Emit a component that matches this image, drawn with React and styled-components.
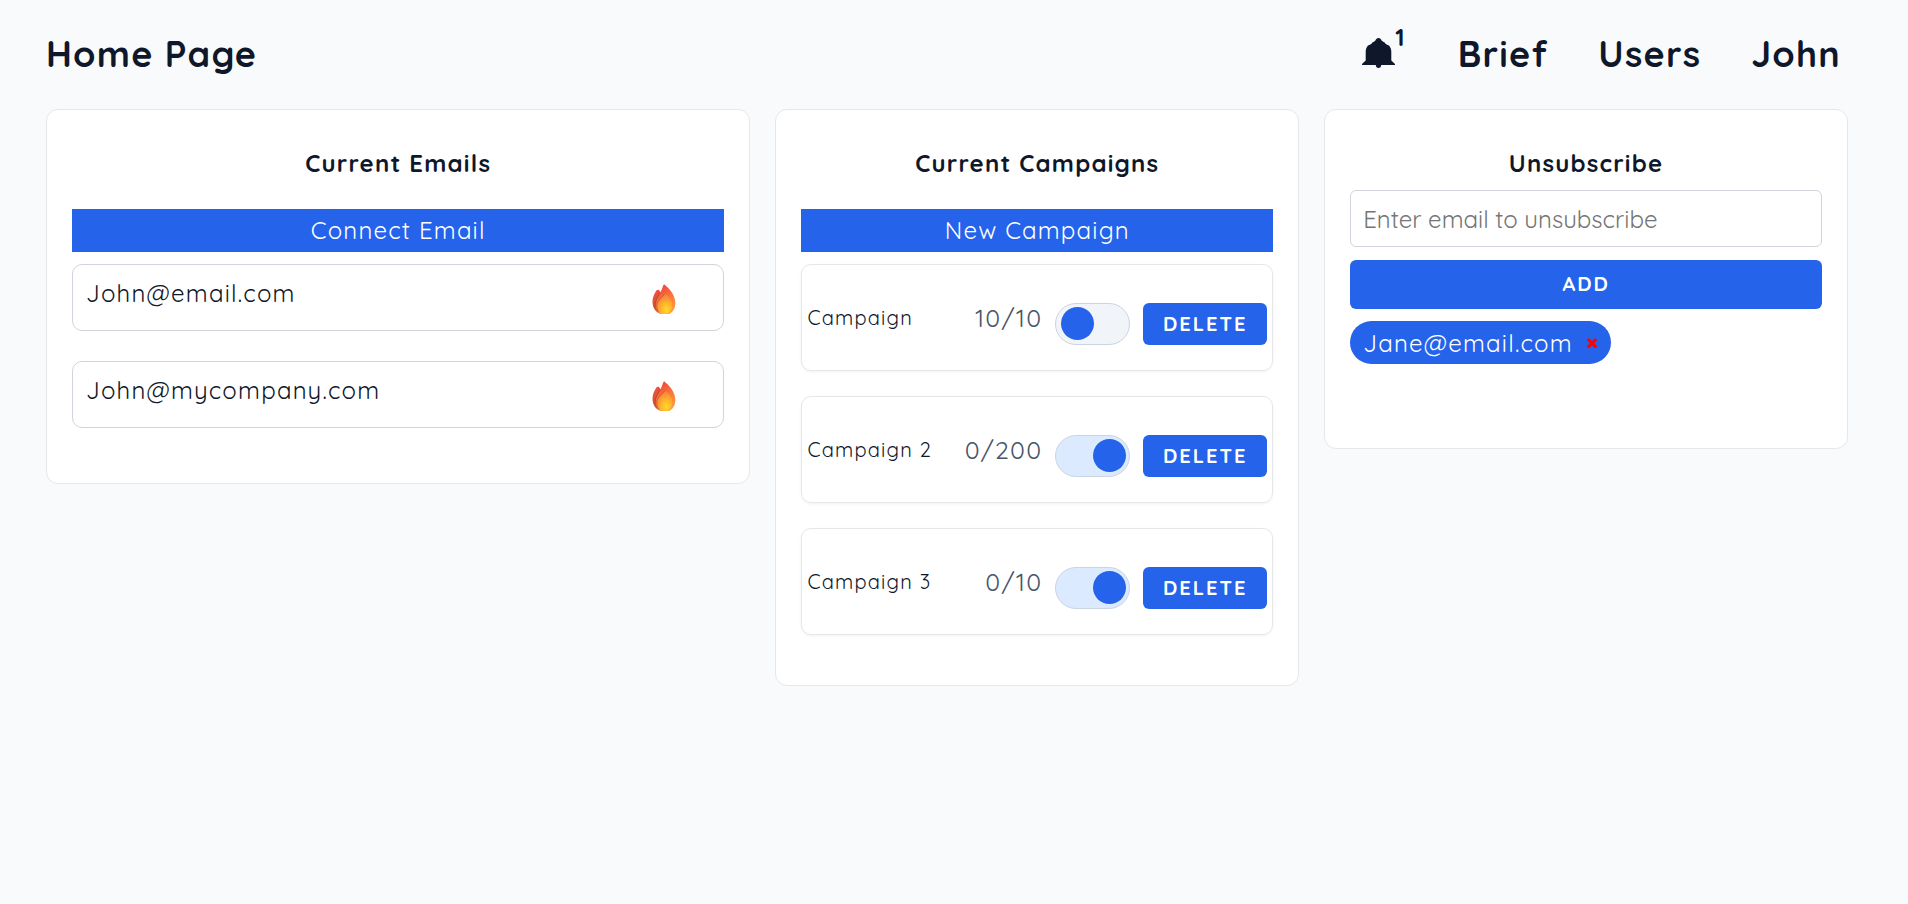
import { useState } from 'react';
import styled, { createGlobalStyle } from 'styled-components';

const emails = ['John@email.com', 'John@mycompany.com'];

const initialCampaigns = [
  { name: 'Campaign', sent: 10, total: 10, active: false },
  { name: 'Campaign 2', sent: 0, total: 200, active: true },
  { name: 'Campaign 3', sent: 0, total: 10, active: true },
];

const App = () => {
  const [campaigns, setCampaigns] = useState(initialCampaigns);
  const [blocked, setBlocked] = useState(['Jane@email.com']);
  const [inputValue, setInputValue] = useState('');

  const toggleCampaign = (name) => {
    setCampaigns(
      campaigns.map((c) => (c.name === name ? { ...c, active: !c.active } : c))
    );
  };

  const deleteCampaign = (name) => {
    setCampaigns(campaigns.filter((c) => c.name !== name));
  };

  const addBlocked = (e) => {
    e.preventDefault();
    const value = inputValue.trim();
    if (!value) return;
    setBlocked([...blocked, value]);
    setInputValue('');
  };

  return (
    <Page>
      <GlobalStyle />
      <Header>
        <PageTitle>Home Page</PageTitle>
        <Nav>
          <BellButton type="button" aria-label="Notifications">
            <BellIcon />
            <BellCount>1</BellCount>
          </BellButton>
          <NavLink href="#brief">Brief</NavLink>
          <NavLink href="#users">Users</NavLink>
          <NavLink href="#john">John</NavLink>
        </Nav>
      </Header>
      <Columns>
        <Card>
          <CardTitle>Current Emails</CardTitle>
          <BarButton type="button">Connect Email</BarButton>
          <List $gap="30px">
            {emails.map((email) => (
              <EmailRow key={email}>
                <span>{email}</span>
                <FlameIcon />
              </EmailRow>
            ))}
          </List>
        </Card>
        <Card>
          <CardTitle>Current Campaigns</CardTitle>
          <BarButton type="button">New Campaign</BarButton>
          <List $gap="25px">
            {campaigns.map((c) => (
              <CampaignRow key={c.name}>
                <CampaignName>{c.name}</CampaignName>
                <CampaignCount>
                  {c.sent}/{c.total}
                </CampaignCount>
                <Controls>
                  <Toggle
                    type="checkbox"
                    aria-label={`${c.name} active`}
                    checked={c.active}
                    onChange={() => toggleCampaign(c.name)}
                  />
                  <DeleteButton
                    type="button"
                    onClick={() => deleteCampaign(c.name)}
                  >
                    DELETE
                  </DeleteButton>
                </Controls>
              </CampaignRow>
            ))}
          </List>
        </Card>
        <Card>
          <CardTitle $tight>Unsubscribe</CardTitle>
          <Form onSubmit={addBlocked}>
            <EmailInput
              type="email"
              aria-label="Email to unsubscribe"
              placeholder="Enter email to unsubscribe"
              value={inputValue}
              onChange={(e) => setInputValue(e.target.value)}
            />
            <AddButton type="submit">ADD</AddButton>
          </Form>
          <Chips>
            {blocked.map((email) => (
              <Chip key={email}>
                {email}
                <ChipRemove
                  type="button"
                  aria-label={`Remove ${email}`}
                  onClick={() => setBlocked(blocked.filter((b) => b !== email))}
                >
                  <svg width="12" height="12" viewBox="0 0 12 12">
                    <path d="M1.8 2 10.2 10.4M10.2 2 1.8 10.4" stroke="#ff0000" strokeWidth="3" />
                  </svg>
                </ChipRemove>
              </Chip>
            ))}
          </Chips>
        </Card>
      </Columns>
    </Page>
  );
};

const BellIcon = () => (
  <svg width="33" height="30" viewBox="0 0 33 30" fill="currentColor">
    <path d="M16.5 0C18 0 19 1 19.6 2.4C20.2 3.3 21.2 3.8 22.4 4.3C23.4 6 25 7 27 7.6C28.6 9.4 29.3 11.4 29.3 14V22.5L33 26V27H19.2C19.2 29 18 30 16.5 30S13.8 29 13.8 27H0V26L3.7 22.5V14C3.7 11.4 4.4 9.4 6 7.6C8 7 9.6 6 10.6 4.3C11.8 3.8 12.8 3.3 13.4 2.4C14 1 15 0 16.5 0Z" />
  </svg>
);

const FlameIcon = () => (
  <svg width="24" height="30" viewBox="0 0 24 30" role="img" aria-label="Warming up">
    <defs>
      <linearGradient id="flameBack" x1="0" y1="0" x2="0" y2="1">
        <stop offset="0" stopColor="#f0503c" />
        <stop offset="1" stopColor="#c9552f" />
      </linearGradient>
      <linearGradient id="flameBody" x1="0" y1="0" x2="0.4" y2="1">
        <stop offset="0" stopColor="#ef3340" />
        <stop offset="0.45" stopColor="#f8673a" />
        <stop offset="1" stopColor="#ff9a3c" />
      </linearGradient>
      <radialGradient id="flameCore" cx="0.62" cy="0.8" r="0.75">
        <stop offset="0" stopColor="#ffd92b" />
        <stop offset="0.45" stopColor="#ffb52c" />
        <stop offset="1" stopColor="#f8813a" />
      </radialGradient>
    </defs>
    <path d="M4.4 6.4C5.6 5.4 7.2 5.8 7.6 7L13 14L10 29.6H7.6C2.8 27.4.4 23 .5 17.6C.6 13.2 2.4 9.4 4.4 6.4Z" fill="url(#flameBack)" />
    <path d="M12 .2C17.4 4.2 23.4 11.2 23.4 19.2C23.4 24.2 20.8 28.2 17 30H8.8C5.8 28 3.6 25 3.8 20.4C4 14.4 7.4 11.4 8.8 7.6C10.2 5 10.6 2 12 .2Z" fill="url(#flameBody)" />
    <path d="M7.8 8C7 12 2.6 15.6 3 23.4" fill="none" stroke="#b94a32" strokeWidth="1" />
    <path d="M13 9.6C17.2 12.4 20.4 16.4 20.3 21.6C20.2 25.8 18.2 28.8 15.8 30H9.4C6.4 28.2 4.6 25.4 4.8 21.4C5.1 16.2 10.2 13.8 13 9.6Z" fill="url(#flameCore)" />
    <path d="M13 9.6C10.2 13.8 5.1 16.2 4.8 21.4C4.7 24 5.4 26.2 6.8 27.8" fill="none" stroke="#c9552f" strokeWidth="0.8" />
  </svg>
);

const GlobalStyle = createGlobalStyle`
  * {
    box-sizing: border-box;
  }
  body {
    margin: 0;
    background-color: #f9fafc;
    color: #0f172a;
    font-family: Quicksand, Lato, sans-serif;
    font-size: 24px;
    letter-spacing: 0.05em;
  }
  button, input {
    font-family: inherit;
  }
`;

const Page = styled.div`
  padding: 0 60px 60px 46px;
`;

const Header = styled.header`
  display: flex;
  align-items: center;
  justify-content: space-between;
  height: 109px;
  padding-bottom: 2px;
`;

const PageTitle = styled.h1`
  margin: 0;
  font-size: 36px;
  font-weight: 700;
`;

const Nav = styled.nav`
  display: flex;
  align-items: center;
  gap: 50px;
  padding-right: 7px;
`;

const NavLink = styled.a`
  color: inherit;
  font-size: 36px;
  font-weight: 700;
  text-decoration: none;
`;

const BellButton = styled.button`
  display: flex;
  align-items: center;
  padding: 0 3px 2px 0;
  border: none;
  background: none;
  color: inherit;
  cursor: pointer;
`;

const BellCount = styled.sup`
  margin-bottom: 30px;
  font-size: 24px;
  font-weight: 700;
  line-height: 25px;
`;

const Columns = styled.main`
  display: grid;
  grid-template-columns: 1.345fr 1fr 1fr;
  align-items: start;
  gap: 25px;
`;

const Card = styled.section`
  padding: 25px 25px 50px;
  border: 1px solid #e5e7eb;
  border-radius: 12px;
  background-color: #fff;
`;

const CardTitle = styled.h2`
  margin: 0;
  padding: ${({ $tight }) => ($tight ? '13px 0 12px' : '13px 0 31px')};
  font-size: 24px;
  font-weight: 700;
  line-height: 30px;
  text-align: center;
`;

const BarButton = styled.button`
  display: block;
  width: 100%;
  height: 43px;
  padding: 0 0 2px;
  border: none;
  background-color: #2563eb;
  color: #fff;
  font-size: 24px;
  letter-spacing: 0.05em;
  cursor: pointer;
`;

const List = styled.ul`
  display: flex;
  flex-direction: column;
  gap: ${({ $gap }) => $gap};
  margin: 12px 0 0;
  padding: 0;
  list-style: none;
`;

const EmailRow = styled.li`
  display: flex;
  align-items: flex-start;
  justify-content: space-between;
  height: 67px;
  padding: 13px 47px 0 13px;
  border: 1px solid #d1d5db;
  border-radius: 10px;
  line-height: 30px;

  svg {
    margin-top: 6px;
  }

  &:last-child {
    margin-bottom: 5px;
  }
`;

const CampaignRow = styled.li`
  display: flex;
  align-items: center;
  height: 107px;
  padding: 0 5px;
  border: 1px solid #e5e7eb;
  border-radius: 10px;
  box-shadow: 0 1px 3px rgba(0, 0, 0, 0.06);
`;

const CampaignName = styled.span`
  flex: 1;
  font-size: 20px;
`;

const CampaignCount = styled.span`
  color: #475569;
  font-size: 25px;
`;

const Controls = styled.div`
  display: flex;
  gap: 13px;
  margin: 12px 0 0 13px;
`;

const Toggle = styled.input`
  appearance: none;
  display: flex;
  align-items: center;
  width: 75px;
  height: 42px;
  margin: 0;
  padding: 0 3px 1px 5px;
  border: 1px solid #cbd5e1;
  border-radius: 21px;
  background-color: #f1f5f9;
  cursor: pointer;

  &::before {
    content: '';
    width: 33px;
    height: 33px;
    border-radius: 50%;
    background-color: #2563eb;
  }

  &:checked {
    justify-content: flex-end;
    background-color: #dbeafe;
  }
`;

const SolidButton = styled.button`
  border: none;
  border-radius: 6px;
  background-color: #2563eb;
  color: #fff;
  font-size: 20px;
  font-weight: 700;
  letter-spacing: 2px;
  cursor: pointer;
`;

const DeleteButton = styled(SolidButton)`
  width: 124px;
  height: 42px;
  padding: 0;
`;

const AddButton = styled(SolidButton)`
  height: 49px;
  padding: 0 0 2px;
`;

const Form = styled.form`
  display: flex;
  flex-direction: column;
  gap: 13px;
`;

const EmailInput = styled.input`
  width: 100%;
  height: 57px;
  padding: 0 12px;
  border: 1px solid #d1d5db;
  border-radius: 6px;
  font-size: 24px;

  &::placeholder {
    color: #757575;
  }
`;

const Chips = styled.div`
  display: flex;
  flex-wrap: wrap;
  gap: 12px;
  margin: 12px 0 34px;
`;

const Chip = styled.span`
  display: flex;
  align-items: center;
  gap: 13px;
  height: 43px;
  padding: 0 13px;
  border-radius: 22px;
  background-color: #2563eb;
  color: #fff;
`;

const ChipRemove = styled.button`
  display: flex;
  padding: 0;
  border: none;
  background: none;
  cursor: pointer;
`;

export default App;
